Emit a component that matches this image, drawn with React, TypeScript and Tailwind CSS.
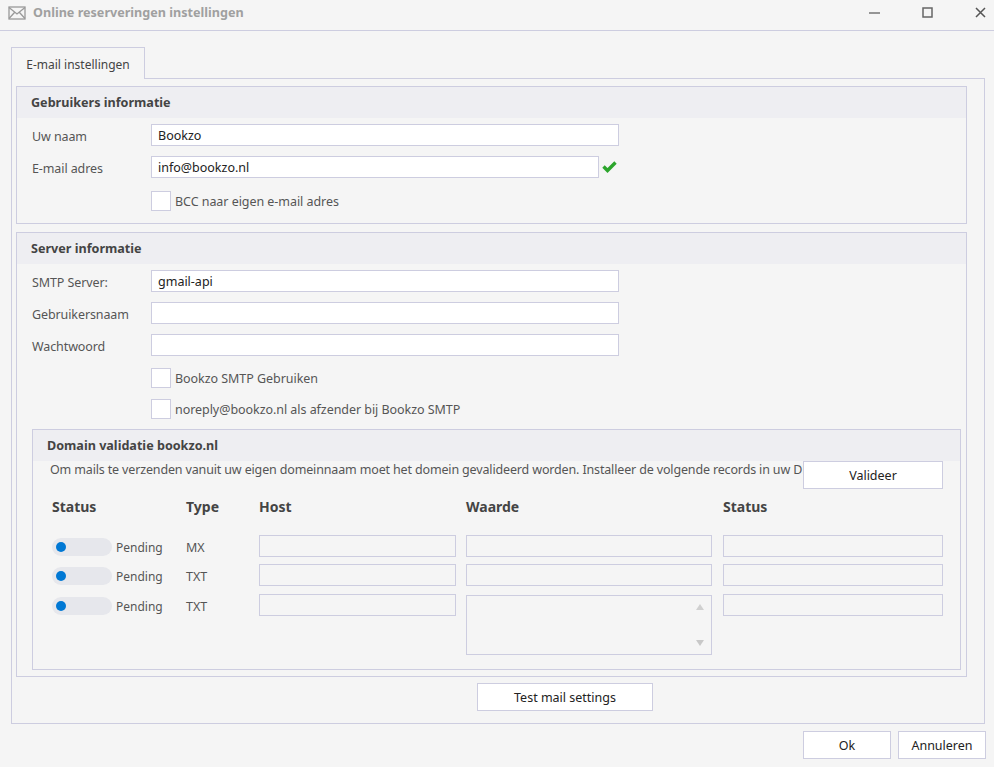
const inputClass = "block h-[22px] border border-[#cdcde0] bg-white px-[6px] text-[12.5px] leading-[22px] text-[#222]";
const emptyField = "h-[22px] border border-[#cdcde0]";
const buttonClass = "flex h-[28px] items-center justify-center border border-[#cdcde0] bg-white pt-[2px] text-[12.5px] text-[#222]";

function Row({ label, value, width = "w-[468px]", children }: { label: string; value?: string; width?: string; children?: React.ReactNode }) {
  return (
    <div className="flex h-[22px] items-center">
      <span className="w-[134px] pl-[15px] pt-[5px] text-[12.5px] tracking-[-0.1px] text-[#555]">{label}</span>
      <div className={`${inputClass} ${width}`}>{value}</div>
      {children}
    </div>
  );
}

function Check({ label }: { label: string }) {
  return (
    <div className="flex h-[20px] items-center pl-[134px]">
      <div className="h-[20px] w-[20px] border border-[#cdcde0] bg-white" />
      <span className="ml-[4px] pt-[2px] text-[12.5px] tracking-[-0.05px] text-[#555]">{label}</span>
    </div>
  );
}

function SectionHeader({ title, pad = "pl-[14px]" }: { title: string; pad?: string }) {
  return (
    <div className={`flex h-[31px] items-center bg-[#eeeef2] pt-[2px] ${pad} text-[12.6px] font-bold text-[#444]`}>{title}</div>
  );
}

const records = [
  { type: "MX", mt: "mt-0" },
  { type: "TXT", mt: "mt-[5px]" },
  { type: "TXT", mt: "mt-[6px]" },
];

export default function App() {
  return (
    <div className="h-[767px] w-[994px] overflow-hidden bg-[#f5f5f5] font-['Noto_Sans',sans-serif]">
      {/* Title bar */}
      <div className="flex h-[31px] items-center border-b border-[#cdcde0] pb-[5px] pl-[8px]">
        <svg width="18" height="14" viewBox="0 0 18 14" fill="none" stroke="#999" strokeWidth="1.3">
          <rect x="1" y="1" width="16" height="12" />
          <path d="M1 1.5 9 8l8-6.5M1 12.5 6.5 6.5M17 12.5 11.5 6.5" />
        </svg>
        <span className="ml-[7px] pt-[2px] text-[12.6px] font-bold text-[#a0a0a0]">Online reserveringen instellingen</span>
        <div className="ml-auto flex items-center">
          <svg width="11" height="11" viewBox="0 0 11 11" className="mr-[42px]" stroke="#555" strokeWidth="1.2">
            <path d="M0 6h11" />
          </svg>
          <svg width="11" height="11" viewBox="0 0 11 11" fill="none" className="mr-[42px]" stroke="#666" strokeWidth="1.5">
            <rect x="1" y="1" width="9" height="9" />
          </svg>
          <svg width="11" height="11" viewBox="0 0 11 11" className="mr-[8px]" stroke="#555" strokeWidth="1.5">
            <path d="M1 1l9 9M10 1l-9 9" />
          </svg>
        </div>
      </div>

      {/* Tab */}
      <div className="ml-[11px] mt-[16px] flex">
        <div className="relative z-10 -mb-px flex h-[32px] w-[134px] items-center justify-center border border-b-0 border-[#cdcde0] bg-[#f5f5f5] pt-[2px] text-[12px] text-[#444]">
          E-mail instellingen
        </div>
      </div>

      {/* Tab panel */}
      <div className="ml-[11px] h-[646px] w-[974px] border border-[#cdcde0] px-[4px] pt-[7px]">
        <div className="h-[138px] w-[951px] border border-[#cdcde0]">
          <SectionHeader title="Gebruikers informatie" />
          <div className="mt-[6px] flex flex-col gap-[10px]">
            <Row label="Uw naam" value="Bookzo" />
            <Row label="E-mail adres" value="info@bookzo.nl" width="w-[448px]">
              <svg width="15" height="12" viewBox="0 0 15 12" className="ml-[3px]">
                <path d="M1.5 5.5 5.5 9.5 13.5 1.5" fill="none" stroke="#2ca52c" strokeWidth="3.4" />
              </svg>
            </Row>
          </div>
          <div className="mt-[13px]">
            <Check label="BCC naar eigen e-mail adres" />
          </div>
        </div>

        <div className="mt-[8px] h-[445px] w-[951px] border border-[#cdcde0]">
          <SectionHeader title="Server informatie" />
          <div className="mt-[6px] flex flex-col gap-[10px]">
            <Row label="SMTP Server:" value="gmail-api" />
            <Row label="Gebruikersnaam" />
            <Row label="Wachtwoord" />
          </div>
          <div className="mt-[12px] flex flex-col gap-[11px]">
            <Check label="Bookzo SMTP Gebruiken" />
            <Check label="noreply@bookzo.nl als afzender bij Bookzo SMTP" />
          </div>

          <div className="relative ml-[15px] mt-[10px] h-[241px] w-[929px] border border-[#cdcde0]">
            <SectionHeader title="Domain validatie bookzo.nl" />
            <div className="ml-[17px] mt-[1px] w-[753px] overflow-hidden whitespace-nowrap text-[12.5px] leading-[16px] tracking-[-0.15px] text-[#555]">
              Om mails te verzenden vanuit uw eigen domeinnaam moet het domein gevalideerd worden. Installeer de volgende records in uw DNS
            </div>
            <button className={`${buttonClass} absolute left-[770px] top-[31px] w-[140px]`}>Valideer</button>

            <div className="ml-[19px] mt-[20px] grid grid-cols-[134px_73px_207px_257px_220px] text-[14px] font-bold leading-[18px] text-[#444]">
              <span>Status</span>
              <span>Type</span>
              <span>Host</span>
              <span>Waarde</span>
              <span>Status</span>
            </div>

            <div className="ml-[19px] mt-[19px]">
              {records.map((r, i) => (
                <div key={i} className={`grid grid-cols-[134px_73px_207px_257px_220px] items-start ${r.mt}`}>
                  <div className="flex h-[24px] items-center">
                    <div className="flex h-[18px] w-[60px] items-center rounded-full bg-[#e6e7ec] pl-[4px]">
                      <div className="h-[10px] w-[10px] rounded-full bg-[#0078d4]" />
                    </div>
                    <span className="ml-[4px] pt-[2px] text-[12px] text-[#555]">Pending</span>
                  </div>
                  <div className="flex h-[24px] items-center pt-[2px] text-[12.5px] text-[#555]">{r.type}</div>
                  <div className={`${emptyField} w-[197px]`} />
                  {i < 2 ? (
                    <div className={`${emptyField} w-[246px]`} />
                  ) : (
                    <div className="relative mt-[1px] h-[60px] w-[246px] border border-[#cdcde0]">
                      <svg width="10" height="7" viewBox="0 0 10 7" className="absolute right-[6px] top-[8px]">
                        <path d="M5 0l4 6H1z" fill="#d0d0d0" />
                      </svg>
                      <svg width="10" height="7" viewBox="0 0 10 7" className="absolute bottom-[7px] right-[6px]">
                        <path d="M1 0h8L5 6z" fill="#c8c8c8" />
                      </svg>
                    </div>
                  )}
                  <div className={`${emptyField} w-[220px]`} />
                </div>
              ))}
            </div>
          </div>
        </div>

        <div className="ml-[461px] mt-[6px] flex">
          <button className={`${buttonClass} w-[176px]`}>Test mail settings</button>
        </div>
      </div>

      {/* Footer */}
      <div className="mt-[7px] flex justify-end gap-[7px] pr-[8px]">
        <button className={`${buttonClass} w-[88px]`}>Ok</button>
        <button className={`${buttonClass} w-[88px]`}>Annuleren</button>
      </div>
    </div>
  );
}
